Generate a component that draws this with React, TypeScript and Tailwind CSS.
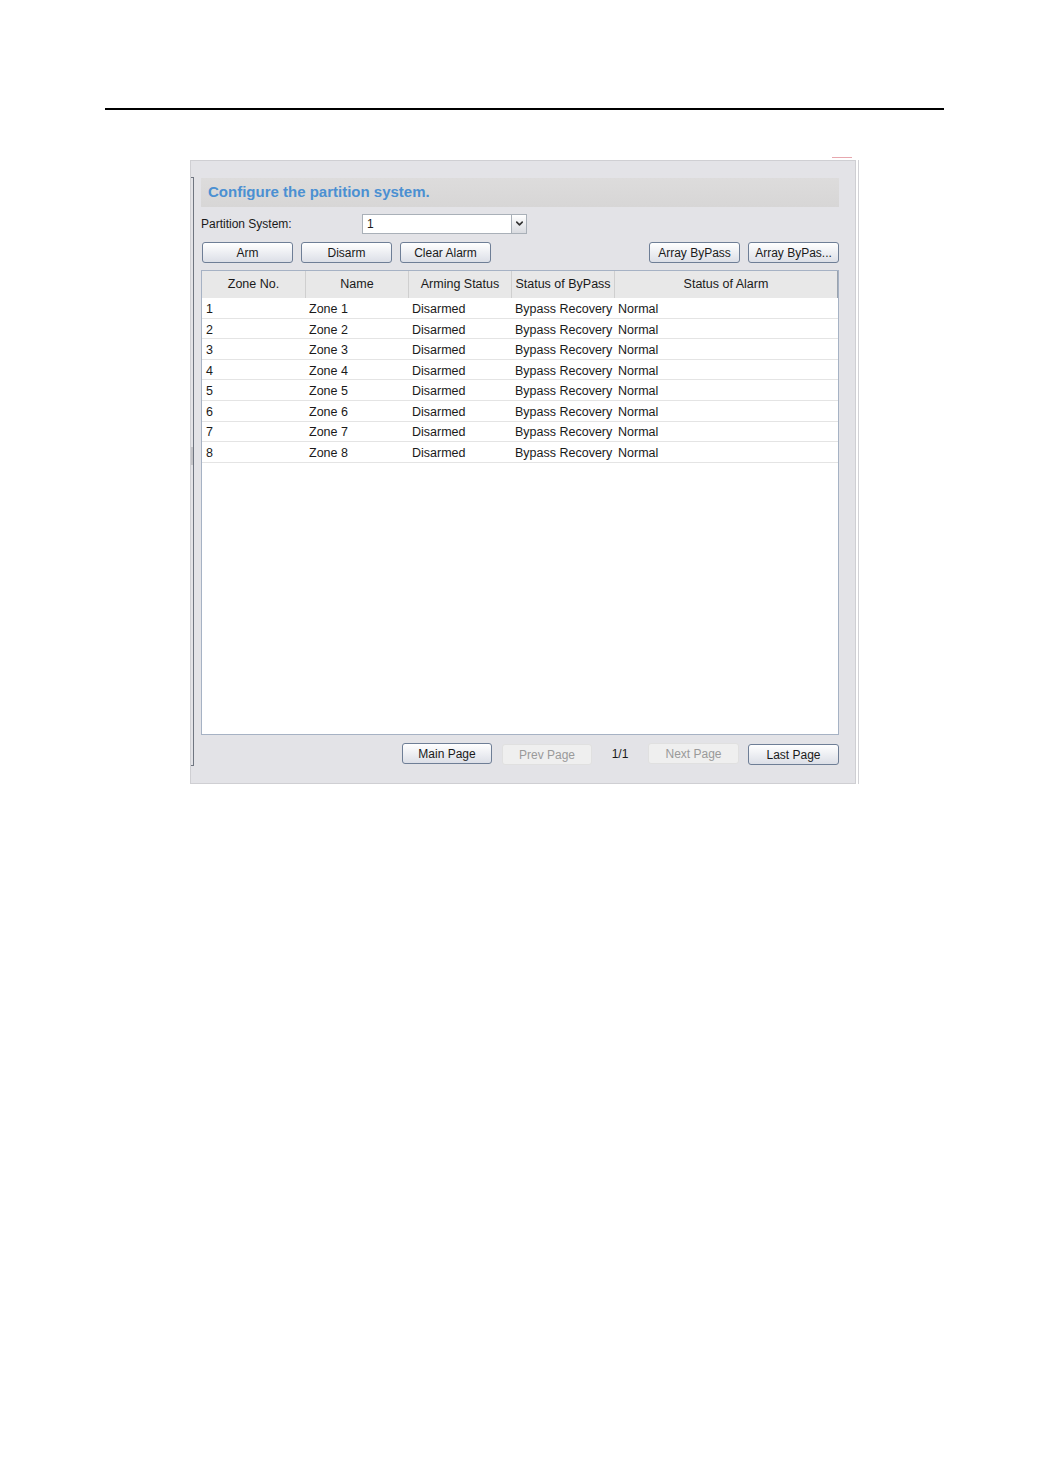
import { ChevronDown } from "lucide-react";

const zones = [1, 2, 3, 4, 5, 6, 7, 8];

const columns = [
  { label: "Zone No.", width: "w-[104px]" },
  { label: "Name", width: "w-[103px]" },
  { label: "Arming Status", width: "w-[103px]" },
  { label: "Status of ByPass", width: "w-[103px]" },
  { label: "Status of Alarm", width: "flex-1" },
];

function Btn({ label, disabled = false, w = "w-[91px]" }: { label: string; disabled?: boolean; w?: string }) {
  return (
    <button
      className={
        disabled
          ? `${w} h-[21px] rounded-[3px] border border-[#e0e0e0] bg-[#efefef] text-[12px] leading-none text-[#9a9a9a]`
          : `${w} h-[21px] rounded-[3px] border border-[#6e7e96] bg-gradient-to-b from-white to-[#dcdfe7] text-[12px] leading-none text-[#1a1a1a]`
      }
    >
      {label}
    </button>
  );
}

export default function App() {
  return (
    <div
      className="min-h-[1474px] bg-white pt-[108px]"
      style={{ fontFamily: '"Liberation Sans", Arial, sans-serif' }}
    >
      <div className="mx-[105px] border-t-2 border-black" />

      <div className="ml-[832px] mt-[47px] h-px w-[20px] bg-[#e7a7ae]" />

      <div className="ml-[190px] mt-[2px] flex w-[669px]">
        <div className="flex h-[624px] w-[666px] border border-[#cfcfd3] bg-[#e3e3e7]">
          {/* left splitter bracket */}
          <div className="mt-[16px] flex h-[589px] w-[3px] flex-col border-y border-r border-[#6f7580]">
            <div className="mt-[269px] h-[18px] w-[2px] bg-[#c4c4c8]" />
          </div>

          <div className="ml-[7px] flex w-[638px] flex-col pt-[17px]">
            <div className="flex h-[29px] items-center bg-gradient-to-b from-[#dddcdc] to-[#d7d6d6] pl-[7px]">
              <span className="text-[15px] font-bold text-[#4b90d2]">Configure the partition system.</span>
            </div>

            <div className="mt-[6px] flex h-[21px] items-center">
              <span className="w-[161px] text-[12px] text-[#1a1a1a]">Partition System:</span>
              <div className="flex h-[20px] w-[165px] items-center border border-[#a9b0b8] bg-white">
                <span className="flex-1 pl-[4px] text-[12px] text-[#1a1a1a]">1</span>
                <div className="flex h-[18px] w-[15px] items-center justify-center border-l border-[#a9b0b8] bg-gradient-to-b from-white to-[#d9dbe0]">
                  <ChevronDown className="h-[11px] w-[11px] text-[#333]" strokeWidth={3.5} />
                </div>
              </div>
            </div>

            <div className="mt-[8px] flex h-[21px] items-center">
              <div className="ml-px flex gap-[8px]">
                <Btn label="Arm" />
                <Btn label="Disarm" />
                <Btn label="Clear Alarm" />
              </div>
              <div className="ml-auto flex gap-[8px]">
                <Btn label="Array ByPass" />
                <Btn label="Array ByPas..." />
              </div>
            </div>

            <div className="mt-[7px] flex h-[465px] flex-col border border-[#a6b2c4] bg-white">
              <div className="flex h-[27px] border-r border-[#9aa3ae] bg-[#e8e8e8]">
                {columns.map((c) => (
                  <div
                    key={c.label}
                    className={`${c.width} flex items-center justify-center border-r border-[#cfcfcf] text-[12.5px] whitespace-nowrap text-[#1a1a1a] last:border-r-0`}
                  >
                    {c.label}
                  </div>
                ))}
              </div>
              {zones.map((z) => (
                <div
                  key={z}
                  className="flex h-[20.6px] items-center border-b border-[#e4e4e4] pt-[3px] text-[12.5px] text-[#1a1a1a]"
                >
                  <div className="w-[104px] pl-[4px]">{z}</div>
                  <div className="w-[103px] pl-[3px]">Zone {z}</div>
                  <div className="w-[103px] pl-[3px]">Disarmed</div>
                  <div className="w-[103px] pl-[3px] whitespace-nowrap">Bypass Recovery</div>
                  <div className="flex-1 pl-[3px]">Normal</div>
                </div>
              ))}
            </div>

            <div className="mt-[8px] flex h-[21px] items-center justify-end">
              <Btn label="Main Page" w="w-[90px]" />
              <div className="ml-[10px]">
                <Btn label="Prev Page" w="w-[90px]" disabled />
              </div>
              <span className="w-[56px] text-center text-[12px] text-[#1a1a1a]">1/1</span>
              <Btn label="Next Page" disabled />
              <div className="ml-[9px]">
                <Btn label="Last Page" />
              </div>
            </div>
          </div>
        </div>
        <div className="ml-[2px] w-px bg-[#d2d2d6]" />
      </div>
    </div>
  );
}
